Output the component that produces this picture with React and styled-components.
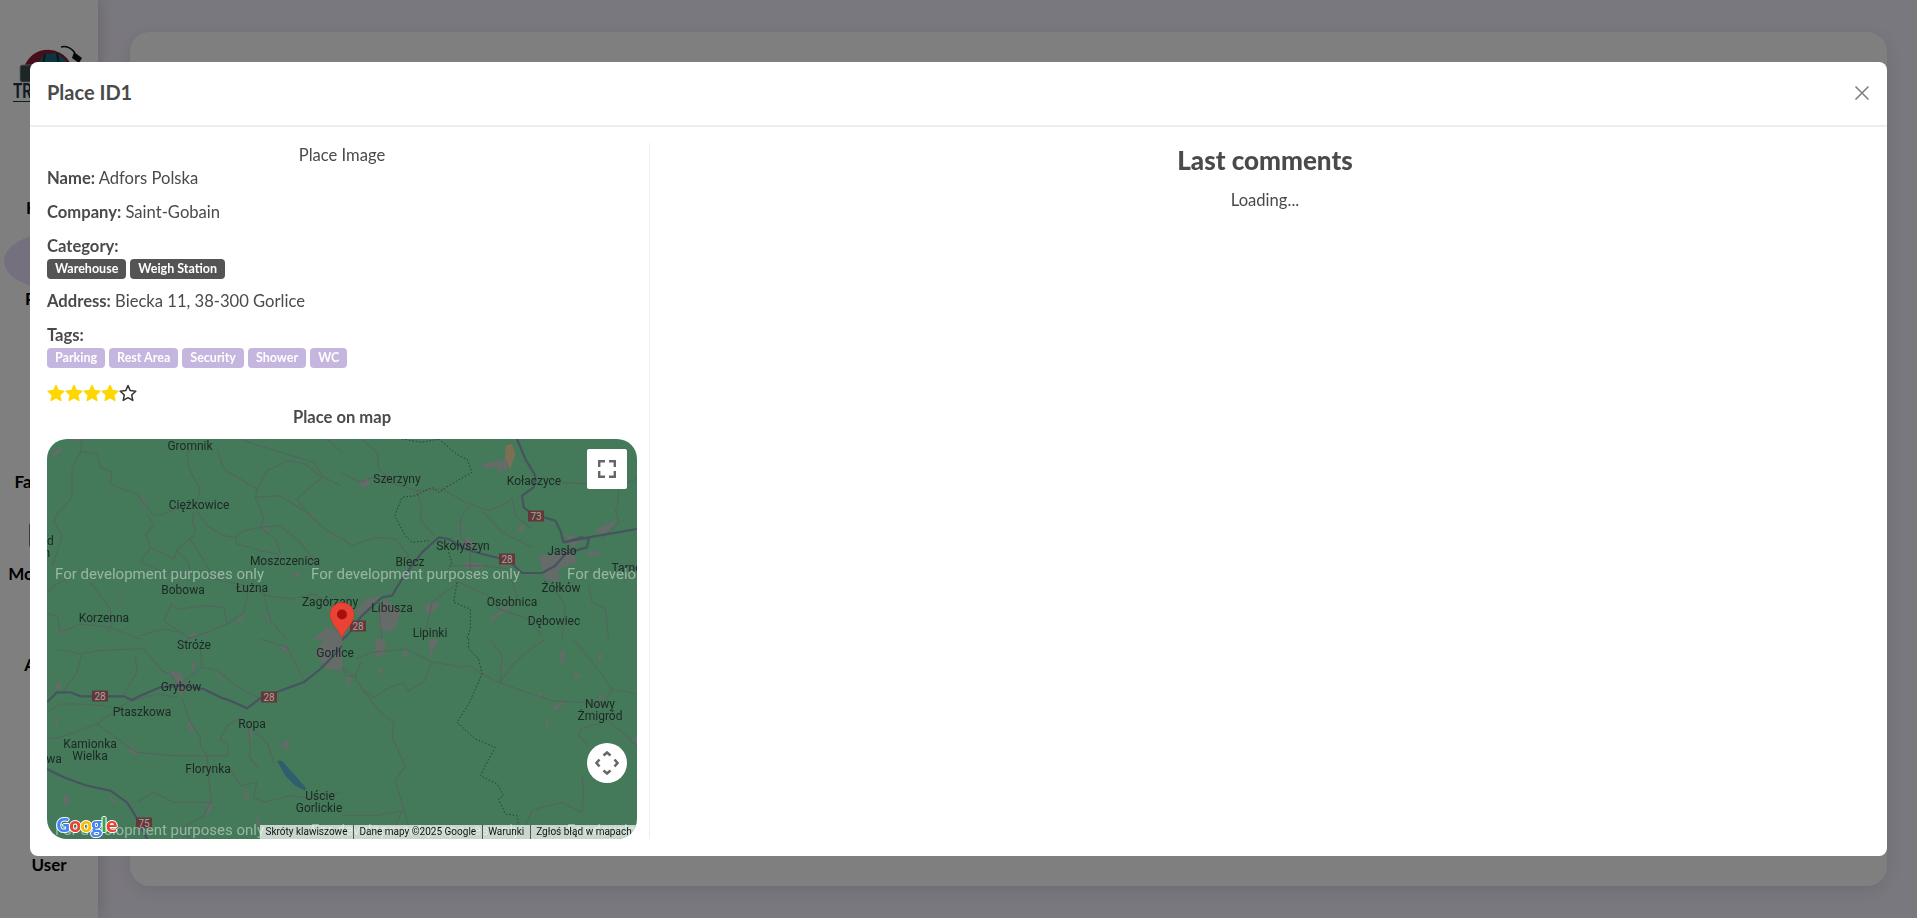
import styled, { createGlobalStyle } from "styled-components";
import { Home, MapPin, Map, Heart, Truck, Shield, User } from "lucide-react";

const SIDE_ITEMS = [
  { label: "Home", Icon: Home, size: 30 },
  { label: "Places", Icon: MapPin, size: 42, active: true },
  { label: "Map", Icon: Map, size: 30 },
  { label: "Favorites", Icon: Heart, size: 30 },
  { label: "Moderator", Icon: Truck, size: 42 },
  { label: "Admin", Icon: Shield, size: 42 },
  { label: "User", Icon: User, size: 28 },
];

const LABELS = [
  ["Gromnik", 143, 7], ["Ciężkowice", 152, 66], ["Szerzyny", 350, 40], ["Kołaczyce", 487, 42],
  ["Skołyszyn", 416, 107], ["Moszczenica", 238, 122], ["Biecz", 363, 123], ["Jasło", 515, 112],
  ["Tarnowiec", 592, 129], ["Bobowa", 136, 151], ["Łużna", 205, 149], ["Żółków", 514, 149],
  ["Zagórzany", 283, 163], ["Libusza", 345, 169], ["Osobnica", 465, 163], ["Korzenna", 57, 179],
  ["Dębowiec", 507, 182], ["Lipinki", 383, 194], ["Stróże", 147, 206], ["Gorlice", 288, 214],
  ["Grybów", 134, 248], ["Ptaszkowa", 95, 273], ["Ropa", 205, 285], ["Nowy", 553, 265],
  ["Żmigród", 553, 277], ["Kamionka", 43, 305], ["Wielka", 43, 317], ["Łukowa", -6, 320],
  ["Florynka", 161, 330], ["Uście", 273, 357], ["Gorlickie", 272, 369], ["Gród", -6, 102],
  ["Zakliczyn", -22, 114],
];

const BADGES = [
  ["73", 489, 77], ["28", 460, 120], ["28", 311, 187], ["28", 53, 257], ["28", 222, 258], ["75", 97, 384],
];

const WATERMARKS = [
  [8, 135], [264, 135], [520, 135], [8, 391], [264, 391], [520, 391],
];

// traced in 3x crops of each map quadrant
const QUADRANTS = [
  {
    dx: 0,
    dy: 0,
    minor: [
      "105,0 100,40 75,90 75,175 30,225 22,250 45,290 30,340 15,380",
      "100,38 150,45 160,85 195,100 190,135 210,145 270,165 300,205 320,230 350,225 400,205 450,185 460,155 425,85 420,45 430,30",
      "305,230 320,260 295,285 310,325 380,360 395,325 440,290 445,275 435,240 440,220",
      "310,325 280,370 340,395 420,410",
      "390,335 425,370 430,410",
      "430,300 480,380 500,420 570,435",
      "450,215 480,260 530,290 565,295 570,315 640,335 690,345 720,380",
      "565,295 590,275 640,265 690,305 700,345",
      "640,265 700,260 760,310 790,350 810,380",
      "510,30 530,90 580,120 630,150 660,95 725,65 775,75 825,115 770,160 750,180 780,220 840,275 885,300",
      "630,150 625,175 650,240 640,265",
      "625,175 700,170 770,215",
      "580,0 620,15 700,40 800,70 830,115 885,140",
      "840,0 885,40",
      "570,435 610,445 660,470 730,480 800,465 840,490",
      "605,450 590,520 540,555 480,580 420,600",
      "650,470 670,545 720,600",
      "370,500 400,510 470,500 530,505 540,555",
      "375,490 350,545 400,580 430,600",
      "130,430 190,510 195,560 180,580",
      "0,525 30,530 40,580 100,555 190,565 240,585 280,600",
      "0,460 20,440 60,420",
      "280,590 350,570 400,580",
    ],
    towns: [
      "8,50 40,25 45,35 20,50", "65,0 95,0 90,10", "280,175 295,185 300,205 285,195", "325,335 350,335 330,340",
      "640,260 670,270 655,275", "770,220 810,235 800,225", "840,275 875,295 850,290", "730,400 760,405 755,420",
      "220,455 232,495 225,490", "375,495 385,505 372,503", "565,545 598,525 580,550", "30,570 65,575 45,585",
      "420,590 450,580 440,600", "660,510 670,550 660,545", "795,600 850,560 885,590 885,600",
    ],
  },
  {
    dx: 885,
    dy: 0,
    minor: [
      "60,0 105,40 110,90 150,125",
      "0,100 50,130 95,115 190,145 225,155",
      "225,155 240,210 235,240 275,290",
      "225,155 300,150 370,190 440,215 490,195 510,175",
      "380,200 355,240 355,290 380,320",
      "420,215 480,280 570,325",
      "0,300 30,320 100,295 160,300",
      "160,300 200,350 175,365",
      "510,175 520,230 570,270",
      "330,380 420,380 500,390",
      "385,340 385,420",
      "350,430 270,490 250,580",
      "350,430 440,470 470,510 560,540 600,590",
      "500,400 525,470 520,500",
      "630,440 670,500 660,600",
      "740,440 750,490 790,510 800,600",
      "820,210 830,250 780,300",
      "660,130 830,140 885,120",
      "825,210 830,150",
      "110,510 120,600",
      "845,430 885,380",
    ],
    dashed: [
      "180,0 240,10 290,0",
      "290,0 350,50 375,60 390,100 320,140 290,160 270,145 220,170 180,175 158,230 190,290 210,310 260,305",
      "320,340 330,370 320,390",
      "345,430 335,490 385,510 385,570 375,600",
    ],
    towns: [
      "420,75 490,60 500,90 470,100 465,85 425,88", "50,130 75,115 85,135 60,150", "345,255 360,255 355,285",
      "365,300 380,295 400,320 360,330", "110,500 130,480 175,520 160,570 125,580 110,560", "250,495 300,490 260,530 250,520",
      "440,540 510,490 500,510 470,530 450,545",
      "590,350 650,345 690,325 730,300 670,285 690,330 705,370 650,390 650,430 610,420 600,390",
      "730,340 770,335 770,350 740,350", "530,260 550,260 545,275 525,280", "760,270 830,240 800,275 770,285",
      "40,520 70,480 115,470 60,535", "470,355 480,380 520,380 515,345", "370,370 420,375 425,390 360,385",
    ],
    main: [
      "-20,620 15,590 60,530 120,475 150,470 180,420 240,340 290,295 320,300 370,330 420,345 500,365 540,402 600,402 640,380 670,345 700,335 735,325 740,300 720,295 665,310 740,295 885,270",
      "525,0 550,60 580,110 575,145 540,170 545,205 570,225 640,245 655,275 665,310",
    ],
  },
  {
    dx: 0,
    dy: 600,
    minor: [
      "0,220 40,195 110,195 165,200 190,205",
      "30,30 100,45 150,35 260,30 290,30 345,95 370,105 400,150",
      "105,45 90,100 50,155",
      "265,50 270,100 230,165",
      "405,175 430,250 460,295 460,320 480,350 540,350 545,320 520,300 540,260 575,240 605,270 610,340 605,350 635,390",
      "0,300 40,295 150,255 240,320 270,340 380,350 480,350",
      "150,255 190,225 240,190 330,165 390,175",
      "470,85 510,95 555,130 600,160 640,178",
      "460,30 465,85 405,130",
      "640,0 720,25 770,120",
      "480,350 490,470 495,490 440,490 380,490 320,460 270,490",
      "550,390 580,440 630,430 620,475 650,490 730,470 800,480 885,460",
      "625,280 660,310 680,370",
      "490,490 470,530 400,570 430,600",
    ],
    towns: [
      "30,130 45,130 40,150 25,150", "350,95 400,100 420,150 400,170 380,110", "432,70 445,70 440,110",
      "695,20 720,20 725,45", "830,0 885,0 885,95 840,90 805,40", "505,100 535,125 515,120", "700,320 725,300 725,335",
      "600,275 615,270 615,300 605,300", "240,310 260,330 280,345 255,345", "420,240 445,270 430,280", "585,440 610,480 595,480",
      "625,510 640,560 632,560", "480,490 498,500 480,530", "190,470 210,490 190,490", "50,470 70,470 55,510", "25,235 35,235 28,265",
    ],
    water: ["690,365 705,365 745,410 775,445 775,455 745,440 715,410"],
    main: [
      "0,190 30,160 70,160 100,172 230,172 255,183 280,170 340,145 400,140 470,150 520,175 550,185 600,208 640,178 700,155 770,130 820,90 860,50 885,20",
      "0,390 50,415 120,440 190,455 240,490 265,530 300,600",
    ],
  },
  {
    dx: 885,
    dy: 600,
    minor: [
      "0,85 40,115 60,150 95,175 125,155 180,130 200,155 245,130 270,70",
      "40,60 90,40 190,30 270,68 360,85 385,80 420,105 470,130 540,155 630,185 720,190 790,200",
      "55,70 40,115",
      "60,150 115,220 155,250 150,295 190,380 160,425 200,560",
      "0,90 15,110 40,115",
      "0,530 100,530 180,515 160,560",
      "445,0 480,50 475,130",
      "610,0 540,50 510,80 475,130",
      "695,0 790,120 810,150 885,165",
      "810,150 780,210",
      "800,245 885,320",
      "780,250 715,270 710,290 740,320",
      "720,410 725,460 720,520 660,490 600,505 570,515 550,560",
    ],
    dashed: ["380,0 380,30 410,60 420,105 380,195 345,250 400,300 460,325 430,380 415,410 465,435 485,470 470,480 490,525 525,530 530,560"],
    towns: [
      "100,0 130,0 130,40 100,60", "260,0 290,0 265,55", "180,40 195,35 195,65", "108,80 125,95 112,110", "15,110 30,115 15,150",
      "480,75 490,90 478,95", "700,95 718,115 695,115", "630,210 665,180 665,195 640,215", "610,240 620,240 615,275", "650,50 670,25 660,85",
      "590,160 600,160 585,185", "770,45 785,45 770,75", "520,105 540,110 525,112", "770,170 790,165 775,195", "870,300 885,320 885,295",
    ],
  },
];

const GOOGLE_LETTERS = [
  ["G", "#4285f4"], ["o", "#ea4335"], ["o", "#fbbc05"], ["g", "#4285f4"], ["l", "#34a853"], ["e", "#ea4335"],
];

function MapDrawing() {
  return (
    <MapLines viewBox="0 0 1770 1200">
      {QUADRANTS.map((q) => (
        <g key={`${q.dx}-${q.dy}`} transform={`translate(${q.dx} ${q.dy})`}>
          {q.towns.map((p) => (
            <polygon key={p} points={p} fill="#656b69" />
          ))}
          {q.water?.map((p) => (
            <polygon key={p} points={p} fill="#2f5f6e" />
          ))}
          {q.minor.map((p) => (
            <polyline key={p} points={p} fill="none" stroke="#54655e" strokeWidth="1.1" strokeLinejoin="round" vectorEffect="non-scaling-stroke" />
          ))}
          {q.dashed?.map((p) => (
            <polyline key={p} points={p} fill="none" stroke="#2f3c37" strokeWidth="1" strokeDasharray="1.5 2" vectorEffect="non-scaling-stroke" />
          ))}
          {q.main?.map((p) => (
            <polyline key={p} points={p} fill="none" stroke="#47535f" strokeWidth="2.2" strokeLinejoin="round" vectorEffect="non-scaling-stroke" />
          ))}
        </g>
      ))}
      <polygon points="1375,20 1395,15 1405,45 1390,90 1375,60" fill="#7d6f55" />
    </MapLines>
  );
}

export default function App() {
  return (
    <>
      <GlobalStyle />
      <Page>
        <Sidebar>
          <Logo>
            <svg width="70" height="40" viewBox="0 0 70 40">
              <path d="M10 28 A25 25 0 0 1 58 20 L50 28Z" fill="#8a1c33" />
              <path d="M20 37 L25 18 L31 9 L45 8 L55 18 L58 30 Z" fill="#1a6a80" />
              <path d="M32 9 L30 20 M44 8 L46 20" stroke="#1c2a30" strokeWidth="2" />
              <rect x="7" y="20" width="14" height="17" rx="2" fill="#3d4a4e" stroke="#b8b8b8" strokeWidth="0.8" />
              <path d="M48 2 C54 0 59 4 62 8" fill="none" stroke="#111" strokeWidth="1.5" />
              <path d="M61 7 L69 13 L66 18 L59 13Z" fill="#111" />
            </svg>
            <LogoText>TRUCK</LogoText>
          </Logo>
          <SideList>
            {SIDE_ITEMS.map(({ label, Icon, size, active }) => (
              <SideItem key={label}>
                <SideIcon $active={active}>
                  <Icon size={size} strokeWidth={2.4} />
                </SideIcon>
                <span>{label}</span>
              </SideItem>
            ))}
          </SideList>
        </Sidebar>
        <Content>
          <Card />
        </Content>
      </Page>

      <Overlay>
        <Modal>
          <ModalHeader>
            <ModalTitle>Place ID1</ModalTitle>
            <CloseButton aria-label="Close">
              <svg width="16" height="16" viewBox="0 0 16 16">
                <path d="M1.5 1.5 L14.5 14.5 M14.5 1.5 L1.5 14.5" stroke="#808080" strokeWidth="1.6" />
              </svg>
            </CloseButton>
          </ModalHeader>
          <ModalBody>
            <Details>
              <PlaceImage>Place Image</PlaceImage>
              <Field>
                <b>Name:</b> Adfors Polska
              </Field>
              <Field>
                <b>Company:</b> Saint-Gobain
              </Field>
              <Field>
                <b>Category:</b>
                <Chips>
                  <Chip>Warehouse</Chip>
                  <Chip>Weigh Station</Chip>
                </Chips>
              </Field>
              <Field>
                <b>Address:</b> Biecka 11, 38-300 Gorlice
              </Field>
              <Field>
                <b>Tags:</b>
                <Chips>
                  {["Parking", "Rest Area", "Security", "Shower", "WC"].map((t) => (
                    <Chip key={t} $tag>
                      {t}
                    </Chip>
                  ))}
                </Chips>
              </Field>
              <Stars>
                {[1, 2, 3, 4, 5].map((n) => (
                  <svg key={n} width="18" height="18" viewBox="0 0 24 24">
                    <path
                      d="M12 2 L15 8.8 L22.4 9.6 L16.9 14.6 L18.4 21.9 L12 18.2 L5.6 21.9 L7.1 14.6 L1.6 9.6 L9 8.8 Z"
                      fill={n < 5 ? "#ffd700" : "none"}
                      stroke={n < 5 ? "#ffd700" : "#333"}
                      strokeWidth="2"
                      strokeLinejoin="round"
                    />
                  </svg>
                ))}
              </Stars>
              <MapTitle>Place on map</MapTitle>
              <MapBox>
                <MapDrawing />
                {LABELS.map(([text, x, y]) => (
                  <MapLabel key={text} $x={x} $y={y}>
                    {text}
                  </MapLabel>
                ))}
                {BADGES.map(([text, x, y]) => (
                  <RoadBadge key={`${text}-${x}`} $x={x} $y={y}>
                    {text}
                  </RoadBadge>
                ))}
                {WATERMARKS.map(([x, y]) => (
                  <Watermark key={`${x}-${y}`} $x={x} $y={y}>
                    For development purposes only
                  </Watermark>
                ))}
                <Marker width="26" height="37" viewBox="0 0 26 37">
                  <path d="M13 36.5 C11 28 1 22 1 12.5 A12 12 0 0 1 25 12.5 C25 22 15 28 13 36.5Z" fill="#ea4335" stroke="#d33126" strokeWidth="0.6" />
                  <circle cx="13" cy="12.5" r="5" fill="#a80f0f" />
                </Marker>
                <FullscreenButton aria-label="Fullscreen">
                  <svg width="18" height="18" viewBox="0 0 18 18">
                    <path d="M1.2 7V1.2H7M11 1.2h5.8V7M16.8 11v5.8H11M7 16.8H1.2V11" fill="none" stroke="#666" strokeWidth="2.4" />
                  </svg>
                </FullscreenButton>
                <PanButton aria-label="Pan">
                  <svg width="24" height="24" viewBox="0 0 24 24">
                    <path d="M8.5 4.5 L12 1.5 L15.5 4.5 M19.5 8.5 L22.5 12 L19.5 15.5 M15.5 19.5 L12 22.5 L8.5 19.5 M4.5 15.5 L1.5 12 L4.5 8.5" fill="none" stroke="#666" strokeWidth="2.5" />
                  </svg>
                </PanButton>
                <GoogleLogo>
                  {GOOGLE_LETTERS.map(([letter, color], i) => (
                    <GoogleLetter key={i} $color={color}>
                      {letter}
                    </GoogleLetter>
                  ))}
                </GoogleLogo>
                <Attribution>
                  <span>Skróty klawiszowe</span>
                  <span>Dane mapy ©2025 Google</span>
                  <span>Warunki</span>
                  <span>Zgłoś błąd w mapach</span>
                </Attribution>
              </MapBox>
            </Details>
            <Comments>
              <h2>Last comments</h2>
              <p>Loading...</p>
            </Comments>
          </ModalBody>
        </Modal>
      </Overlay>
    </>
  );
}

const GlobalStyle = createGlobalStyle`
  * { box-sizing: border-box; }
  html, body { margin: 0; height: 100%; overflow: hidden; }
  body { font-family: Lato, "Noto Sans", sans-serif; color: #4a4a4a; }
`;

const Page = styled.div`
  display: flex;
  height: 918px;
  background-color: #f5f1fe;
`;

const Sidebar = styled.aside`
  width: 98px;
  flex-shrink: 0;
  background-color: #fff;
  box-shadow: 0 0 16px rgba(0, 0, 0, 0.2);
  padding-top: 45px;
  z-index: 1;
`;

const Logo = styled.div`
  display: flex;
  flex-direction: column;
  align-items: flex-start;
  height: 76px;
  padding-left: 13px;
`;

const LogoText = styled.div`
  font-family: Roboto, sans-serif;
  font-size: 21px;
  font-weight: 700;
  line-height: 16px;
  color: #1c3a4a;
  padding-bottom: 2px;
  border-bottom: 1px solid #1c3a4a;
  margin-top: -2px;
  transform: scaleX(0.72);
  transform-origin: left;
`;

const SideList = styled.nav`
  display: flex;
  flex-direction: column;
  padding-top: 9px;
`;

const SideItem = styled.div`
  height: 91.5px;
  display: flex;
  flex-direction: column;
  align-items: center;
  justify-content: flex-end;
  font-size: 17px;
  font-weight: 700;
  color: #000;
  padding-bottom: 4px;
  &:last-child {
    margin-top: 108px;
  }
`;

const SideIcon = styled.div`
  width: 90px;
  height: 54px;
  flex-shrink: 0;
  display: flex;
  align-items: center;
  justify-content: center;
  border-radius: 50%;
  background-color: ${(props) => (props.$active ? "#e8e0fb" : "transparent")};
  color: #2a1a05;
`;

const Content = styled.main`
  flex: 1;
  padding: 32px 30px 32px 32px;
`;

const Card = styled.div`
  height: 100%;
  background-color: #fff;
  border-radius: 20px;
  box-shadow: 0 4px 20px rgba(0, 0, 0, 0.1);
`;

const Overlay = styled.div`
  position: fixed;
  inset: 0;
  background-color: rgba(0, 0, 0, 0.5);
  z-index: 10;
  padding: 62px 30px;
`;

const Modal = styled.div`
  height: 794px;
  background-color: #fff;
  border-radius: 8px;
  display: flex;
  flex-direction: column;
`;

const ModalHeader = styled.header`
  height: 65px;
  flex-shrink: 0;
  display: flex;
  align-items: center;
  justify-content: space-between;
  padding: 0 17px 2px 17px;
  border-bottom: 2px solid #eeeeee;
`;

const ModalTitle = styled.h1`
  margin: 0 0 1px;
  font-size: 20px;
  font-weight: 700;
  color: #4a4a4a;
`;

const CloseButton = styled.button`
  border: none;
  background: none;
  padding: 0;
  display: flex;
`;

const ModalBody = styled.div`
  flex: 1;
  display: flex;
  padding: 16px 17px 17px;
  min-height: 0;
`;

const Details = styled.section`
  width: 603px;
  flex-shrink: 0;
  padding-right: 12px;
  border-right: 1px solid #eeeeee;
  font-size: 16.6px;
  line-height: 24px;
  b {
    font-weight: 700;
  }
`;

const PlaceImage = styled.div`
  text-align: center;
  height: 23px;
`;

const Field = styled.div`
  margin-bottom: 10px;
`;

const Chips = styled.div`
  display: flex;
  gap: 4px;
  margin-top: 1px;
`;

const Chip = styled.span`
  height: 20px;
  padding: 0 8px;
  border-radius: 4px;
  background-color: ${(props) => (props.$tag ? "#c5b6e0" : "#545454")};
  color: #fff;
  font-size: 12.5px;
  font-weight: 700;
  line-height: 20px;
`;

const Stars = styled.div`
  display: flex;
  height: 18px;
  margin-top: 16px;
`;

const MapTitle = styled.div`
  text-align: center;
  font-weight: 700;
  margin: 3px 0 10px;
`;

const MapBox = styled.div`
  position: relative;
  width: 590px;
  height: 400px;
  border-radius: 20px;
  overflow: hidden;
  background-color: #447a59;
  font-family: Roboto, sans-serif;
`;

const MapLines = styled.svg`
  position: absolute;
  inset: 0;
  width: 100%;
  height: 100%;
`;

const MapLabel = styled.span`
  position: absolute;
  left: ${(props) => props.$x}px;
  top: ${(props) => props.$y}px;
  transform: translate(-50%, -50%);
  font-size: 12px;
  line-height: 12px;
  white-space: nowrap;
  color: #1d2724;
`;

const RoadBadge = styled.span`
  position: absolute;
  left: ${(props) => props.$x}px;
  top: ${(props) => props.$y}px;
  transform: translate(-50%, -50%);
  width: 16px;
  height: 11px;
  background-color: #633838;
  color: #a9a3a3;
  font-size: 10px;
  line-height: 11px;
  text-align: center;
`;

const Watermark = styled.span`
  position: absolute;
  left: ${(props) => props.$x}px;
  top: ${(props) => props.$y}px;
  transform: translateY(-50%);
  font-size: 15px;
  white-space: nowrap;
  color: rgba(255, 255, 255, 0.45);
`;

const Marker = styled.svg`
  position: absolute;
  left: 282px;
  top: 163px;
`;

const FullscreenButton = styled.button`
  position: absolute;
  left: 540px;
  top: 10px;
  width: 40px;
  height: 40px;
  padding: 0;
  border: none;
  border-radius: 2px;
  background-color: #fff;
  display: flex;
  align-items: center;
  justify-content: center;
`;

const PanButton = styled(FullscreenButton)`
  top: 304px;
  border-radius: 50%;
`;

const GoogleLogo = styled.div`
  position: absolute;
  left: 9px;
  bottom: 2px;
  font-family: "Open Sans", sans-serif;
  font-size: 20px;
  font-weight: 700;
  line-height: 24px;
  letter-spacing: -1.4px;
  text-shadow: -1px 0 #fff, 1px 0 #fff, 0 -1px #fff, 0 1px #fff;
`;

const GoogleLetter = styled.span`
  color: ${(props) => props.$color};
`;

const Attribution = styled.div`
  position: absolute;
  left: 213px;
  right: 0;
  bottom: 0;
  height: 14px;
  display: flex;
  overflow: hidden;
  white-space: nowrap;
  background-color: rgba(255, 255, 255, 0.7);
  color: #111;
  font-size: 10px;
  line-height: 14px;
  span {
    padding: 0 5.5px;
    border-right: 1px solid #555;
    flex-shrink: 0;
  }
  span:last-child {
    border-right: none;
  }
`;

const Comments = styled.section`
  flex: 1;
  text-align: center;
  padding-left: 10px;
  h2 {
    margin: 0 0 11px;
    font-size: 26px;
    font-weight: 900;
    line-height: 34px;
    color: #4a4a4a;
  }
  p {
    margin: 0;
    font-size: 16.6px;
    line-height: 24px;
  }
`;
